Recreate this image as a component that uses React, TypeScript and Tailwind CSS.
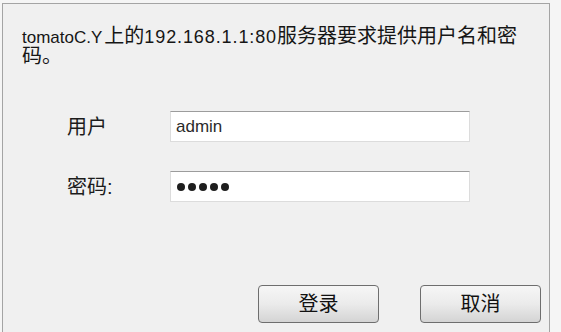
import React from 'react';

const font = '[font-family:"Liberation_Sans","Noto_Sans_CJK_SC",sans-serif]';

const Field = ({ label, children }: { label: string; children: React.ReactNode }) => (
  <div className="flex items-center">
    <div className="w-[103px] text-[20px] leading-[20px] text-[#1c1c1c]">{label}</div>
    <div className="w-[300px] h-[31px] bg-white border border-[#dcdcdc] border-t-[#9c9c9c] flex items-center pl-[4px]">
      {children}
    </div>
  </div>
);

const Button = ({ text }: { text: string }) => (
  <button className="w-[121px] h-[38px] rounded-[4px] border border-[#6e6e6e] bg-gradient-to-b from-[#f6f6f6] via-[#ebebeb] to-[#d4d4d4] text-[20px] leading-[20px] text-[#111]">
    {text}
  </button>
);

const App = () => {
  return (
    <div className={`w-[561px] h-[332px] bg-[#f5f5f5] pt-[3px] pl-[2px] pr-[11px] ${font}`}>
      <div className="h-full flex flex-col border-l border-t border-r border-[#a4a4a4] bg-[#f0f0f0]">
        <p className="pt-[23px] pl-[19px] text-[20px] leading-[19px] text-[#161616]">
          <span className="text-[17px]">tomatoC.Y</span>
          <span className="pl-[2px]">上的</span>
          <span className="text-[18px] tracking-[0.9px]">192.168.1.1:80</span>服务器要求提供用户名和密
          <br />
          码。
        </p>

        <div className="mt-[45px] pl-[64px] flex flex-col gap-[29px]">
          <Field label="用户">
            <span className="text-[17px] text-[#2a2a2a] pl-[1px]">admin</span>
          </Field>
          <Field label="密码:">
            <div className="flex gap-[3px] pl-[2px]">
              <span className="w-[8px] h-[8px] rounded-full bg-[#1e1e1e]" />
              <span className="w-[8px] h-[8px] rounded-full bg-[#1e1e1e]" />
              <span className="w-[8px] h-[8px] rounded-full bg-[#1e1e1e]" />
              <span className="w-[8px] h-[8px] rounded-full bg-[#1e1e1e]" />
              <span className="w-[8px] h-[8px] rounded-full bg-[#1e1e1e]" />
            </div>
          </Field>
        </div>

        <div className="mt-auto mb-[9px] pr-[8px] flex justify-end gap-[41px]">
          <Button text="登录" />
          <Button text="取消" />
        </div>
      </div>
    </div>
  );
};

export default App;
